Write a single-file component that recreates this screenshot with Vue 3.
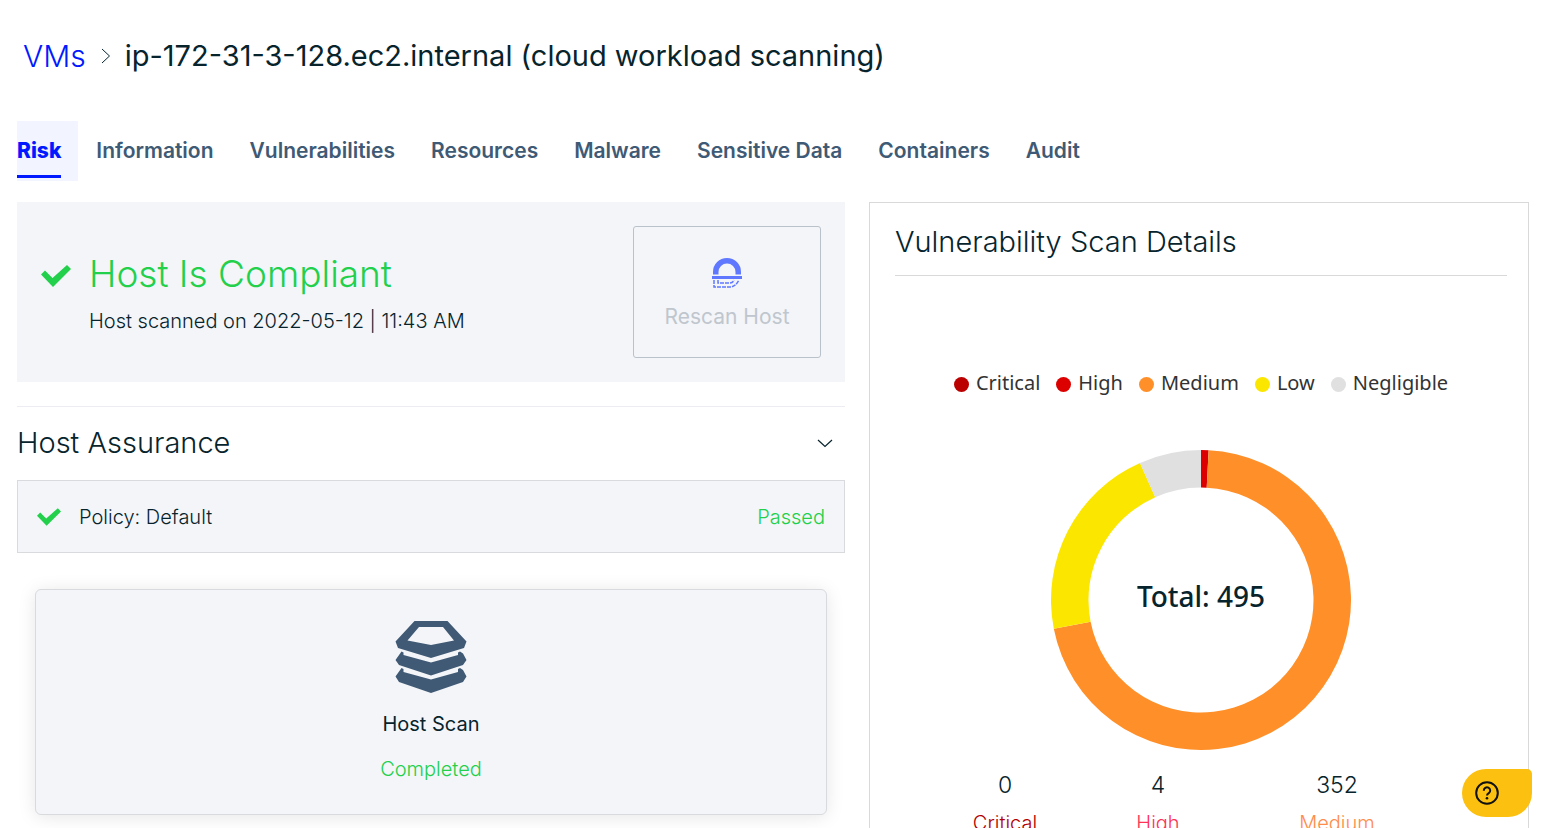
<script setup>
const tabs = ['Risk', 'Information', 'Vulnerabilities', 'Resources', 'Malware', 'Sensitive Data', 'Containers', 'Audit']

const severities = [
  { name: 'Critical', count: 0, color: '#ba0000', text: '#b30000' },
  { name: 'High', count: 4, color: '#dc0000', text: '#ff3358' },
  { name: 'Medium', count: 352, color: '#ff9029', text: '#ff8c4d' },
  { name: 'Low', count: 106, color: '#fbe600', text: '#d8c600' },
  { name: 'Negligible', count: 33, color: '#e0e0e0', text: '#8a8a8a' }
]

const total = severities.reduce((sum, s) => sum + s.count, 0)

function ringPoint(radius, fraction) {
  const angle = fraction * 2 * Math.PI
  return `${150 + radius * Math.sin(angle)} ${150 - radius * Math.cos(angle)}`
}

let start = 0
const slices = severities
  .filter((s) => s.count > 0)
  .map((s) => {
    const from = start / total
    start += s.count
    const to = start / total
    const large = to - from > 0.5 ? 1 : 0
    return {
      color: s.color,
      d: `M${ringPoint(150, from)} A150 150 0 ${large} 1 ${ringPoint(150, to)} L${ringPoint(112.5, to)} A112.5 112.5 0 ${large} 0 ${ringPoint(112.5, from)}Z`
    }
  })
</script>

<template>
  <div class="page">
    <header class="crumbs">
      <a class="crumb-link" href="#vms">VMs</a>
      <svg class="crumb-arrow" viewBox="0 0 10 16" aria-hidden="true"><path d="M1 1l7.500 7-7.500 7" /></svg>
      <h1>ip-172-31-3-128.ec2.internal (cloud workload scanning)</h1>
    </header>

    <nav class="tabs">
      <a v-for="(tab, i) in tabs" :key="tab" :class="['tab', { active: i === 0 }]" href="#tab"><span>{{ tab }}</span></a>
    </nav>

    <main class="columns">
      <section class="left">
        <div class="status">
          <svg class="status-check" viewBox="0 0 30 22" aria-hidden="true"><path d="M0 9.500L4 5.500 11.500 13 26 0l4 4L12 22z" /></svg>
          <div class="status-text">
            <h2>Host Is Compliant</h2>
            <p>Host scanned on 2022-05-12 | 11:43 AM</p>
          </div>
          <button class="rescan" type="button" disabled>
            <svg viewBox="0 0 30 30" aria-hidden="true">
              <path class="solid" d="M1 16.500V14a14 14 0 0 1 28 0v2.500h-5.500V14a8.500 8.500 0 0 0-17 0v2.500z" />
              <path class="solid" d="M0 18h30v3H0z" />
              <path class="dash" d="M2 22v7h17q5-1 8-7" />
              <path class="dash" d="M6 22v3h12q3 0 4-3" />
            </svg>
            <span>Rescan Host</span>
          </button>
        </div>

        <div class="assurance-head">
          <h3>Host Assurance</h3>
          <button class="collapse" type="button" aria-label="Collapse Host Assurance">
            <svg viewBox="0 0 16 9" aria-hidden="true"><path d="M1 1l7 6.500L15 1" /></svg>
          </button>
        </div>

        <div class="policy">
          <svg class="policy-check" viewBox="0 0 30 22" aria-hidden="true"><path d="M0 9.500L4 5.500 11.500 13 26 0l4 4L12 22z" /></svg>
          <span class="policy-name">Policy: Default</span>
          <span class="good">Passed</span>
        </div>

        <div class="scan-card">
          <svg viewBox="0 0 72 72" aria-hidden="true">
            <path fill-rule="evenodd" d="M19.500 0h33L71.500 20.500 69 27 36 37 3 27 .500 20.500zM24 6L12.500 19.500 36 24l23-4.500L48 6z" />
            <path d="M6.500 30.500l2 1V34L36 41.500 63 34v-2.500l2-1 3 2 3.500 6.500L68 44 36 54.500 4 44 .500 39z" />
            <path d="M6.500 47l2 1v3L36 58.500 63 51v-3l2-1 3 2 3.500 6.500L68 61 36 72 4 61 .500 55.500z" />
          </svg>
          <span class="scan-name">Host Scan</span>
          <span class="good">Completed</span>
        </div>
      </section>

      <section class="details">
        <h3>Vulnerability Scan Details</h3>
        <ul class="legend">
          <li v-for="s in severities" :key="s.name">
            <i :style="{ background: s.color }"></i>{{ s.name }}
          </li>
        </ul>
        <div class="donut">
          <svg viewBox="0 0 300 300" role="img" aria-label="Vulnerabilities by severity">
            <path v-for="s in slices" :key="s.color" :d="s.d" :fill="s.color" />
          </svg>
          <span>Total: {{ total }}</span>
        </div>
        <dl class="counts">
          <div v-for="s in severities.slice(0, 3)" :key="s.name">
            <dd>{{ s.count }}</dd>
            <dt :style="{ color: s.text }">{{ s.name }}</dt>
          </div>
        </dl>
      </section>
    </main>

    <button class="help" type="button" aria-label="Help">
      <svg viewBox="0 0 24 24" aria-hidden="true">
        <circle cx="12" cy="12" r="10.800" />
        <path d="M8.800 9.700a3.200 3.200 0 1 1 5 2.500c-1.200.8-1.800 1.200-1.800 2.300" />
        <circle class="dot" cx="12" cy="17.300" r="1.300" />
      </svg>
    </button>
  </div>
</template>

<style>
body {
  margin: 0;
  overflow: hidden;
  background: #fff;
}
</style>

<style scoped>
.page {
  box-sizing: border-box;
  height: 100vh;
  overflow: hidden;
  padding: 36px 12px 0 17px;
  font-family: Inter, "Liberation Sans", sans-serif;
  font-size: 20px;
  line-height: 28px;
  font-weight: 300;
  color: #07242d;
}
h1, h2, h3, p, ul, dl, dd { margin: 0; padding: 0; }
button { font: inherit; padding: 0; }
svg { display: block; flex: none; }

.crumbs {
  display: flex;
  align-items: center;
  padding-left: 6px;
  font-size: 30px;
  line-height: 40px;
}
.crumb-link { color: #0019ff; text-decoration: none; }
.crumb-arrow {
  width: 10px;
  height: 16px;
  margin: 0 14px 0 15px;
  fill: none;
  stroke: #07242d;
}
h1 { font-size: 29px; line-height: 40px; font-weight: 400; }

.tabs { display: flex; margin-top: 45px; }
.tab {
  display: flex;
  align-items: center;
  height: 60px;
  padding: 0 18px;
  font-size: 21px;
  font-weight: 600;
  color: #3f5a75;
  text-decoration: none;
}
.tab.active {
  padding: 0 17px 0 0;
  background: #f2f4ff;
  color: #0019ff;
  font-weight: 800;
}
.tab span { line-height: 48px; border: solid transparent; border-width: 3px 0; }
.tab.active span { border-bottom-color: #0019ff; }

.columns {
  display: grid;
  grid-template-columns: minmax(0, 828fr) minmax(0, 660fr);
  gap: 24px;
  margin-top: 21px;
}
.status {
  display: flex;
  padding: 24px;
  background: #f3f5f9;
}
.status-check { width: 30px; height: 22px; margin: 39px 18px 0 0; fill: #22d04b; }
.status-text { flex: 1; padding-top: 24px; }
h2 { font-size: 37px; line-height: 48px; font-weight: 300; color: #22d04b; }
.status-text p { margin-top: 9px; }
.rescan {
  display: flex;
  flex-direction: column;
  align-items: center;
  gap: 15px;
  box-sizing: border-box;
  width: 188px;
  height: 132px;
  padding-top: 31px;
  border: 1px solid #b9c1ca;
  border-radius: 3px;
  background: none;
  font-size: 21px;
  font-weight: 400;
  color: #c0c6cd;
}
.rescan svg { width: 30px; height: 30px; }
.solid { fill: #6078ff; }
.dash { fill: none; stroke: #6078ff; stroke-width: 1.500; stroke-dasharray: 4 1; }

.assurance-head {
  display: flex;
  align-items: center;
  justify-content: space-between;
  height: 72px;
  margin-top: 24px;
  padding: 0 12px 1px 0;
  border-top: 1px solid #ececf2;
}
h3 { font-size: 29px; line-height: 40px; font-weight: 300; }
.collapse { border: 0; background: none; }
.collapse svg { width: 16px; height: 9px; fill: none; stroke: #07242d; stroke-width: 1.200; }

.policy {
  display: flex;
  align-items: center;
  padding: 22px 19px 21px;
  border: 1px solid #d8dadd;
  background: #f3f5f9;
}
.policy-check { width: 24px; height: 18px; margin-right: 18px; fill: #22d04b; }
.policy-name { flex: 1; }
.good { color: #22d04b; }

.scan-card {
  display: flex;
  flex-direction: column;
  align-items: center;
  margin: 36px 18px 0;
  padding: 31px 0;
  border: 1px solid #d8dadd;
  border-radius: 6px;
  background: #f3f5f9;
  box-shadow: 0 2px 18px rgba(0, 0, 0, 0.1);
}
.scan-card svg { width: 72px; height: 72px; fill: #405a75; }
.scan-name { margin: 17px 0; font-weight: 400; }

.details {
  padding: 19px 21px 0 25px;
  border: 1px solid #d9d9d9;
}
.details h3 { padding-bottom: 13px; border-bottom: 1px solid #d9d9d9; }
.legend {
  display: flex;
  justify-content: center;
  gap: 16px;
  margin-top: 93px;
  list-style: none;
  font: 400 20px/28px "Noto Sans", sans-serif;
  color: #333;
}
.legend li { display: flex; align-items: center; gap: 7px; }
.legend i { width: 15px; height: 15px; margin-top: 2px; border-radius: 50%; }
.donut {
  display: grid;
  place-items: center;
  margin-top: 53px;
}
.donut svg, .donut span { grid-area: 1 / 1; }
.donut svg { width: 300px; height: 300px; }
.donut span { padding-bottom: 8px; font: 500 28px/36px "Noto Sans", sans-serif; }
.counts {
  display: grid;
  grid-template-columns: 72fr 81fr 98fr;
  margin-top: 17px;
  padding: 0 72px 0 38px;
  text-align: center;
}
.counts dd { font-size: 23px; line-height: 36px; }
.counts dt { margin-top: 6px; }

.help {
  position: fixed;
  right: 9px;
  bottom: 11px;
  width: 70px;
  height: 48px;
  padding-left: 13px;
  border: 0;
  border-radius: 24px 5px 24px 24px;
  background: #fcc010;
}
.help svg { width: 24px; height: 24px; fill: none; stroke: #111; stroke-width: 2; }
.help .dot { fill: #111; stroke: none; }
</style>
